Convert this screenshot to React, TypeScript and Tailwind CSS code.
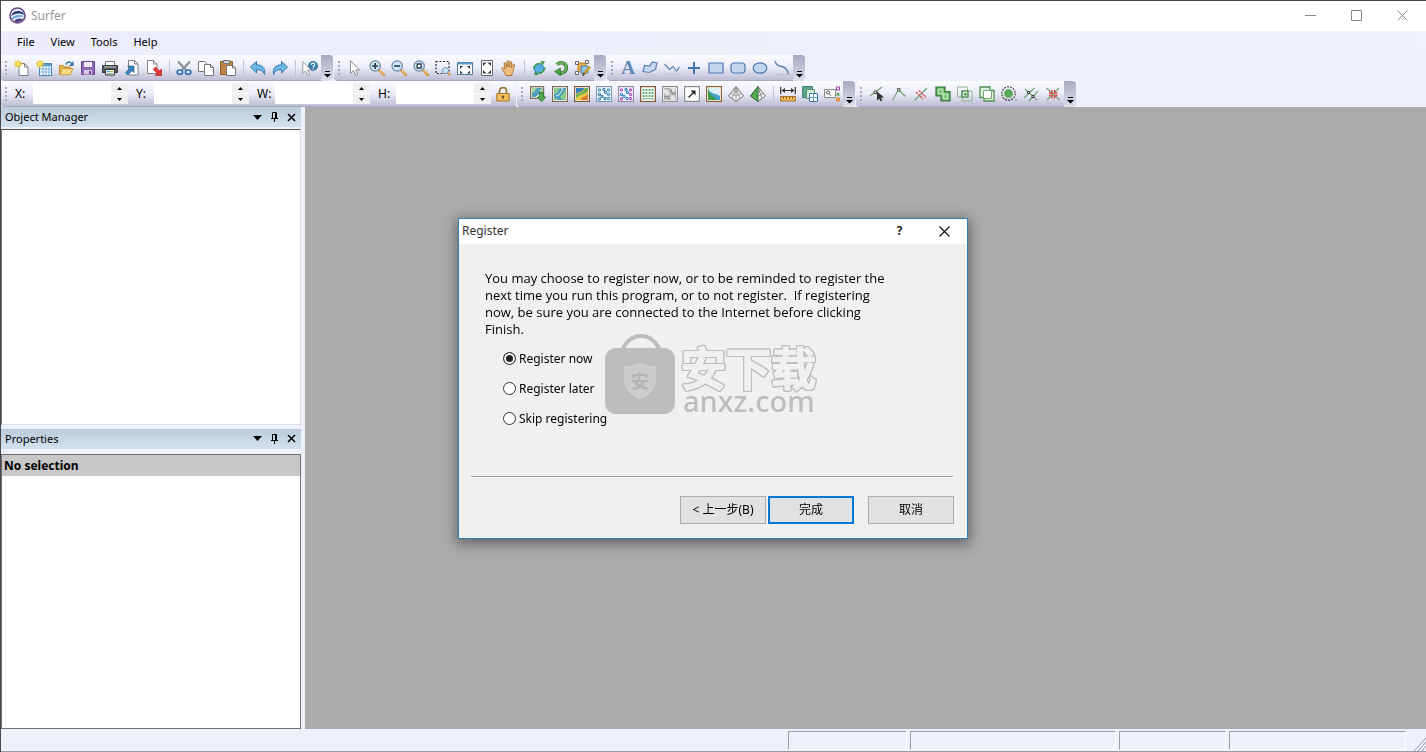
import { useState, type ReactNode } from 'react';

const GREEN = '#3f9a45';

function Sparkle() {
  return (
    <g stroke="#ecc81e" strokeWidth="1.3">
      <path d="M4 0v8M0 4h8M1.2 1.2l5.6 5.6M6.8 1.2L1.2 6.8" />
      <circle cx="4" cy="4" r="1.3" fill="#fff7b0" stroke="none" />
    </g>
  );
}

function Lens({ children }: { children?: ReactNode }) {
  return (
    <>
      <path d="M10 10l5 5" stroke="#d49a45" strokeWidth="2.6" strokeLinecap="round" />
      <path d="M10 9.6l4.6 4.6" stroke="#f5d08d" strokeWidth="1" />
      <circle cx="6.2" cy="6" r="5.2" fill="#cfe7f7" stroke="#6d879c" strokeWidth="1.2" />
      {children}
    </>
  );
}

function Frame({ color = '#8a8d90', children }: { color?: string; children?: ReactNode }) {
  return (
    <>
      <rect x=".6" y=".6" width="14.8" height="14.8" fill="#fff" stroke={color} strokeWidth="1.2" />
      {children}
    </>
  );
}

function Dots({ color, alt }: { color: string; alt: string }) {
  const points = [[3.5, 4], [8, 3.5], [12.5, 4], [3.5, 8.5], [12.5, 8.5], [6, 10.5], [3.5, 13], [9, 12.5], [12.5, 12.5], [9.5, 6.5]];
  return (
    <>
      {points.map(([x, y], i) => (
        <circle key={i} cx={x} cy={y} r="1.1" stroke={i % 2 ? alt : color} strokeWidth="1.1" />
      ))}
    </>
  );
}

const ICONS: Record<string, ReactNode> = {
  New: (
    <>
      <path d="M5 3.5h5.5l3.5 3.5v8.5H5z" fill="#fff" stroke="#7d7f86" />
      <path d="M10.5 3.5V7H14" stroke="#7d7f86" />
      <Sparkle />
    </>
  ),
  'New Worksheet': (
    <>
      <rect x="3.5" y="3.5" width="12" height="12" fill="#fff" stroke="#4f86b5" />
      <path d="M4 5h11" stroke="#5d9ccb" strokeWidth="2.4" />
      <path d="M4 9h11M4 12h11M7 6v9M10 6v9M13 6v9" stroke="#7fb4dc" strokeWidth="1.2" />
      <Sparkle />
    </>
  ),
  Open: (
    <>
      <path d="M1.5 14.5v-9h4l1 1.5h6v2" fill="#e7b850" stroke="#c08c2a" />
      <path d="M1.5 14.8l3-6.3h10.5l-3 6.3z" fill="#fbdc84" stroke="#c6963a" />
      <path d="M8 4.5C9 1.5 12 1.3 13.5 3.5" stroke="#2f74a8" strokeWidth="1.5" />
      <path d="M15.5 1v5H11z" fill="#2f74a8" />
    </>
  ),
  Save: (
    <>
      <path d="M1.5 1.5h13v13h-13z" fill="#8f68b5" stroke="#6d4695" />
      <path d="M4 2h8v5H4z" fill="#f0eaf6" />
      <path d="M4 10h8v4.5H4z" fill="#d9cbe6" />
      <path d="M9 11h2v3H9z" fill="#6d4695" />
    </>
  ),
  Print: (
    <>
      <path d="M3.5 1.5h9V6h-9z" fill="#fff" stroke="#777" />
      <path d="M.5 5.5h15v7H.5z" fill="#55585c" stroke="#3b3d40" />
      <path d="M2 7h12" stroke="#c9ccd0" />
      <path d="M3.5 9.5h9V15h-9z" fill="#e9f0e8" stroke="#333" />
      <path d="M5 11.5h3" stroke="#2ba8d8" />
      <path d="M8 11.5h3" stroke="#d5c235" />
      <path d="M5 13.5h6" stroke="#83bd88" />
    </>
  ),
  Import: (
    <>
      <path d="M4.5.5h6L14 4v11H4.5z" fill="#fff" stroke="#7d7f86" />
      <path d="M10.5.5V4H14" stroke="#7d7f86" />
      <path d="M10 6v6.5L8 10.8 3.8 15 1.5 12.7 5.7 8.5 3.8 6z" fill="#3784b9" stroke="#1f608f" strokeWidth=".7" />
    </>
  ),
  Export: (
    <>
      <path d="M1.5.5h6L11 4v9.5H1.5z" fill="#fff" stroke="#8a8080" />
      <path d="M7.5.5V4H11" stroke="#8a8080" />
      <path d="M15.5 15.5V9l-2 2-4-4-2.3 2.3 4 4L9 15.5z" fill="#e23b35" stroke="#ae1e1b" strokeWidth=".7" />
    </>
  ),
  Cut: (
    <>
      <path d="M2 1.5l8.5 9M14 1.5l-8.5 9" stroke="#858d94" strokeWidth="2" />
      <ellipse cx="3.8" cy="12.2" rx="2.8" ry="2.2" stroke="#3276b0" strokeWidth="1.7" />
      <ellipse cx="12.2" cy="12.2" rx="2.8" ry="2.2" stroke="#3276b0" strokeWidth="1.7" />
    </>
  ),
  Copy: (
    <>
      <path d="M.5 1.5h6L9 4v7.5H.5z" fill="#fff" stroke="#777" />
      <path d="M6.5 4.5h6l3 3v8h-9z" fill="#fff" stroke="#777" />
      <path d="M12.5 4.5v3h3" stroke="#777" />
    </>
  ),
  Paste: (
    <>
      <path d="M.5 1.5h12v13H.5z" fill="#bc8545" stroke="#8f5e27" />
      <path d="M3.5.5h6v3h-6z" fill="#d4d4d4" stroke="#777" />
      <path d="M6.5 5.5h6l3 2.5v7.5h-9z" fill="#fff" stroke="#777" />
      <path d="M12.5 5.5V8h3" stroke="#777" />
    </>
  ),
  Undo: (
    <path d="M6.5 1.5v3.3c6 0 9 3.7 8 9.7-1.2-3.5-3.500-5-8-5V13L.5 7z" fill="#70b9e4" stroke="#2d78ab" strokeLinejoin="round" />
  ),
  Redo: (
    <path d="M9.5 1.5v3.3c-6 0-9 3.7-8 9.7 1.2-3.5 3.5-5 8-5V13l6-6z" fill="#70b9e4" stroke="#2d78ab" strokeLinejoin="round" />
  ),
  'Context Help': (
    <>
      <circle cx="11" cy="6" r="5" fill="#397fab" />
      <path d="M9.3 4.8c.2-2.3 3.6-2 3.4 0 0 1.2-1.6 1.2-1.6 2.5M11.1 8.3v1.3" stroke="#fff" strokeWidth="1.3" />
      <path d="M.8 1.5v12L3.7 11l2 4.5 2-1-2-4.3h3.6z" fill="#fff" stroke="#85888d" strokeWidth=".8" />
    </>
  ),
  Select: <path d="M3.5.8v12.5l3-2.8 2.2 5 2-1-2-4.5h4z" fill="#fff" stroke="#888c93" />,
  'Zoom In': <Lens><path d="M3.2 6h6M6.2 3v6" stroke="#25394b" strokeWidth="1.6" /></Lens>,
  'Zoom Out': <Lens><path d="M3.2 6h6" stroke="#25394b" strokeWidth="1.6" /></Lens>,
  'Zoom Selected': <Lens><path d="M4.2 4h4v4h-4z" fill="#fff" stroke="#25394b" strokeWidth="1.3" /></Lens>,
  'Zoom Rectangle': (
    <>
      <path d="M1 1.5h13v12H1z" stroke="#333" strokeWidth="1.2" strokeDasharray="2 1.5" />
      <circle cx="10.5" cy="10.5" r="3" fill="#cde4f4" stroke="#7893ac" />
      <path d="M13 13l2.3 2.3" stroke="#d49a45" strokeWidth="2" />
    </>
  ),
  'Fit to Window': (
    <>
      <path d="M.5 2.5h15v12H.5z" fill="#fff" stroke="#527b9b" />
      <path d="M1 3.5h14" stroke="#5d9ccb" strokeWidth="2" />
      <path d="M3 9V6h3zM10 6h3v3zM3 10.5v3h3zM13 10.5v3h-3z" fill="#26343d" />
    </>
  ),
  'Fit to Page': (
    <>
      <path d="M2.5.5h11v15h-11z" fill="#fff" stroke="#66696c" />
      <path d="M4 6V2.500h3.500zM8.500 2.500H12V6zM4 10v3.500h3.500zM12 10v3.500H8.500z" fill="#333" />
    </>
  ),
  Pan: (
    <path d="M5 15.5C3.8 12.5 1.5 10 .8 8.3c.7-1.3 2-.4 3.3 1L3 3.5c.4-1.3 1.7-1 2 .2l1 3.5V1.8c.4-1.5 2-1.3 2 0V7l1-4.7c.6-1.2 2-.7 1.8.6l-.6 4.7 1.8-3c.8-.8 2-.1 1.6 1-.8 2.4-1.2 5.7-2.6 7.6v2.3z" fill="#efbf7d" stroke="#a46c2d" strokeWidth=".9" />
  ),
  Trackball: (
    <>
      <path d="M3 15h9" stroke="#c3c6d2" />
      <circle cx="8" cy="8.5" r="5" fill="#58aee2" stroke="#2a79ad" strokeWidth=".8" />
      <path d="M2.5 8.5C3.5 5 6 3.500 9.500 3.500" stroke={GREEN} strokeWidth="1.4" />
      <path d="M9.5.8l4.500.6-2.500 4z" fill={GREEN} />
      <path d="M14 7.500c-.8 3.500-3.500 5.500-6.500 5.500" stroke={GREEN} strokeWidth="1.4" />
      <path d="M7 15.200l-4.500-.6 2.500-3.600z" fill={GREEN} />
    </>
  ),
  Redraw: (
    <>
      <path d="M4 4.5C8 .8 13.5 3.5 13.3 8c-.2 4-5 6.5-8.3 4.3" stroke="#34792f" strokeWidth="3.6" />
      <path d="M4 4.5C8 .8 13.5 3.5 13.3 8c-.2 4-5 6.5-8.3 4.3" stroke="#68b25c" strokeWidth="2" />
      <path d="M7.5 8v7.5l-6-4z" fill="#4f9e47" stroke="#34792f" strokeWidth=".7" />
    </>
  ),
  Reshape: (
    <>
      <path d="M3 3h8v8H3z" fill="#f3b13d" stroke="#c07d1b" />
      <path d="M6 6h7v7H6z" fill="#8dc6ee" stroke="#427fae" />
      <path d="M.5 1.5h3v3h-3zM10.5.5h3v3h-3zM.5 11.5h3v3h-3z" fill="#fff" stroke="#555" strokeWidth=".9" />
      <path d="M15 6.5l-6.5 8" stroke="#d5952c" strokeWidth="2.4" />
      <path d="M9.5 13l-1.8 2.7" stroke="#444" strokeWidth="1.5" />
    </>
  ),
  Polygon: (
    <>
      <path d="M1 11.5l1.5-6 5 .5 3-4L15 3l-1.5 6.5-6.5 3z" fill="#c7d9ee" stroke="#5d7fae" strokeWidth="1.2" />
      <path d="M3 15h11" stroke="#b9c7db" />
    </>
  ),
  Polyline: (
    <>
      <path d="M.5 4l5 5.5 3.5-3 3.5 4.5 3-4" stroke="#5d7fae" strokeWidth="1.2" />
      <path d="M2 14.5h12" stroke="#b9c7db" />
    </>
  ),
  Symbol: <path d="M8 2v12M2 8h12" stroke="#4574aa" strokeWidth="2" />,
  Rectangle: <path d="M1 3h14v10H1z" fill="#c3d8f0" stroke="#4f77ad" strokeWidth="1.2" />,
  'Rounded Rectangle': <rect x="1" y="3" width="14" height="10" rx="3" fill="#c3d8f0" stroke="#4f77ad" strokeWidth="1.2" />,
  Ellipse: <ellipse cx="8" cy="8" rx="6.8" ry="5.2" fill="#c3d8f0" stroke="#4f77ad" strokeWidth="1.2" />,
  Spline: (
    <>
      <path d="M1 1c1 4 3 5 6.5 5.5 4 .5 6 3 7 8" stroke="#5d7fae" strokeWidth="1.3" />
      <path d="M1 14.5h12" stroke="#b9c7db" />
    </>
  ),
  Lock: (
    <>
      <path d="M4.5 8V5c0-4.5 7-4.5 7 0v3" stroke="#9a7a3c" strokeWidth="1.8" />
      <path d="M1.8 7.5h12.4V15H1.8z" fill="#f0bd5a" stroke="#a8782a" />
      <path d="M8 9.5V13M6.8 10.5h2.4" stroke="#5c3f12" strokeWidth="1.2" />
    </>
  ),
  'Base Map from Server': (
    <>
      <path d="M.6.6h13v11.8H.6z" fill="#eaf4e6" stroke="#7d6c55" strokeWidth="1.2" />
      <path d="M2 2h10.5v4L8 9l-3 2H2z" fill="#4d9fc0" />
      <path d="M2 2h5L4 6 2 7zM9 4l3.5-2v6z" fill="#a5d3a0" />
      <path d="M9.5 6.5h4V11h2.3l-4.3 4.8L7.2 11h2.3z" fill="#53a84d" stroke="#2e7730" strokeWidth=".8" />
    </>
  ),
  'Base Map': (
    <Frame color="#7d6c55">
      <path d="M2 2h12v12H2z" fill="#4d9fc0" />
      <path d="M2 2h6L5 7 2 8zM10 9l4-6v11h-3l-3-3zM2 11l4 3H2z" fill="#8cc98a" />
      <path d="M9 2l2 1-4 6-3 1" stroke="#e4f0dc" />
    </Frame>
  ),
  'Contour Map': (
    <Frame color="#7c5b34">
      <path d="M2 2h12v12H2z" fill="#e9c843" />
      <path d="M2 2h8c0 4-4 3-8 6z" fill="#377ec0" />
      <path d="M2 9c5-3 8-2 9-7h3v2c-2 5-7 3-12 8z" fill="#5dae57" />
      <path d="M7 14c0-4 5-3 7-6v6z" fill="#dd7b2c" />
    </Frame>
  ),
  'Post Map': <Frame color="#7d9bb4"><Dots color="#3e93bf" alt="#3e7fae" /></Frame>,
  'Classed Post Map': <Frame color="#9887b0"><Dots color="#b04fb8" alt="#3a85c2" /></Frame>,
  'Image Map': (
    <Frame color="#7c5b34">
      <path d="M3.5 2v12M6.5 2v12M9.5 2v12M12.5 2v12" stroke="#53a86a" strokeWidth="1.8" />
      <path d="M2 2.5h12M2 5.5h12M2 8.5h12M2 11.5h12M2 14h12" stroke="#fff" strokeWidth="1" />
    </Frame>
  ),
  'Shaded Relief': (
    <Frame>
      <path d="M2 2h12v12H2z" fill="#b5b5b5" />
      <path d="M2 3l4 1 2 4-3 2-3-3zM8 2h6l-2 5-3-2zM9 9l4 1v4H8z" fill="#e3e3e3" />
      <path d="M2 11l4-1 2 4M9 3l1 4 4 1" stroke="#858585" />
    </Frame>
  ),
  'Vector Map': (
    <Frame>
      <path d="M4.5 11.5l5-5" stroke="#222" strokeWidth="1.3" />
      <path d="M6.5 4.5h5v5z" fill="#222" />
    </Frame>
  ),
  'Watershed Map': (
    <Frame color="#8a632f">
      <path d="M2 2h12v12H2z" fill="#dff1f8" />
      <path d="M2 3c2 5 7 4 12 7v4H2z" fill="#42a0cb" />
      <path d="M2 2c1 7 5 8 9 12H2z" fill="#3f9a45" />
    </Frame>
  ),
  Wireframe: (
    <>
      <path d="M8 .5l7.5 9.5L8 15.5.5 10z" fill="#f4f4f4" stroke="#777" />
      <path d="M8 1v14M8 1L4 12.5M8 1l4 11.5M5.5 4.5L8 6l2.5-1.5M3 7.5L8 10l5-2.5" stroke="#888" strokeWidth=".8" />
    </>
  ),
  Surface: (
    <>
      <path d="M8 .5l7.5 9.5L8 15.5.5 10z" fill="#f4f4f4" stroke="#777" />
      <path d="M8 .5v15L.5 10z" fill="#56a852" stroke="#2f7432" />
      <path d="M8 1l4 11.5M8 6l2.5-1.5M8 10l5-2.5" stroke="#777" strokeWidth=".8" />
    </>
  ),
  Measure: (
    <>
      <path d="M.7 1v7M15.3 1v7M3 4.5h10" stroke="#333" strokeWidth="1.2" />
      <path d="M5 2v5L1.5 4.5zM11 2v5l3.5-2.5z" fill="#333" />
      <path d="M.6 10.5h14.8V15H.6z" fill="#f3bd5a" stroke="#a36e25" />
      <path d="M3.5 11v2M6.5 11v2M9.5 11v2M12.5 11v2" stroke="#8a5c1e" />
    </>
  ),
  'Track Cursor': (
    <>
      <path d="M.6.6h10v11H.6z" fill="#59aa8c" stroke="#477" />
      <path d="M4.5 3.5h8v9h-8z" fill="#d5ecd0" stroke="#57926a" />
      <path d="M7.5 7.5h8v8h-8z" fill="#fff" stroke="#3f79a8" />
      <path d="M8 11.5h7M11.5 8v7" stroke="#5d9ccb" />
    </>
  ),
  'Grid Query': (
    <>
      <path d="M.5 3.5h11v8H.5z" fill="#fff" stroke="#888" />
      <circle cx="4" cy="6.5" r="1.6" stroke="#555" />
      <path d="M5.2 7.8l2 2" stroke="#555" />
      <path d="M12.5 1h3v3h-3z" stroke="#a64fb5" strokeWidth="1.2" />
      <path d="M14 6l2 3.5h-4z" fill="#3f9a45" />
      <circle cx="14" cy="13.5" r="1.8" fill="#f29b38" stroke="#cc7118" strokeWidth=".6" />
    </>
  ),
  'Edit Vertices': (
    <>
      <path d="M1 10L13 1M5 6l8 4" stroke="#75a577" strokeWidth="1.2" />
      <path d="M5 5h2.5v2.5H5z" fill="#fff" stroke="#444" />
      <path d="M8 5.5v9l2.3-1.7 1.500 2.700 1.500-1-1.300-2.700 3-.3z" fill="#333" />
    </>
  ),
  'Insert Vertex': (
    <>
      <path d="M1.5 14l6-10 7 6.5" stroke="#75a577" strokeWidth="1.2" />
      <path d="M6.5 2.5H9V5H6.5z" fill="#fff" stroke="#555" />
      <path d="M2 15.5h9" stroke="#c2cabf" />
    </>
  ),
  'Break Line': (
    <>
      <path d="M1.5 14.5L14 2" stroke="#75a577" strokeWidth="1.2" />
      <path d="M3 6l7 7M6 4.5l7 7" stroke="#d04741" strokeWidth="1.3" strokeDasharray="2.2 .8" />
    </>
  ),
  'Union Polygons': (
    <>
      <path d="M1 1h9v4.5h5V15H6v-5H1z" fill="#57a957" stroke="#34753a" strokeWidth="1.2" />
      <path d="M3 3h5v5H3z" fill="#83c67e" stroke="#d4ecd2" />
      <path d="M8 8h5v5H8z" fill="#83c67e" stroke="#d4ecd2" />
    </>
  ),
  'Intersect Polygons': (
    <>
      <path d="M.5 1h10v10H.5zM5 5h10v10H5z" stroke="#8eb890" />
      <path d="M5 5h6v6H5z" fill="#dff0dc" stroke="#34753a" strokeWidth="1.2" />
      <path d="M7 7h2.500v2.500H7z" fill="#4a9e4c" />
    </>
  ),
  'Difference Polygons': (
    <>
      <path d="M1 1h10v3.5h4V15H5v-3.5H1z" fill="#e4f2e1" stroke="#4f8f52" strokeWidth="1.3" />
      <path d="M4.5 4.5h8v8h-8z" fill="#fff" stroke="#72a874" />
    </>
  ),
  Buffer: (
    <>
      <circle cx="7.5" cy="7.5" r="6.7" stroke="#333" strokeWidth="1.2" strokeDasharray="1.8 1.2" />
      <circle cx="7.5" cy="7.5" r="4.2" fill="#57a957" stroke="#7dbb7a" />
      <path d="M15 13.5V15" stroke="#555" />
    </>
  ),
  'Points at Intersections': (
    <>
      <path d="M1 12L11.5 2M6 15l9-10M2 3l12 11" stroke="#75a577" strokeWidth="1.2" />
      <path d="M4.5 5.5h2v2h-2zM9 9.5h2v2H9z" fill="#fff" stroke="#333" />
    </>
  ),
  'Break at Intersections': (
    <>
      <path d="M1.5 2l13 12M14 2L2 14" stroke="#75a577" strokeWidth="1.2" />
      <path d="M7 4v3H4M9.5 4v3h3M7 12.5v-3H4M9.5 12.5v-3h3" stroke="#d04741" strokeWidth="1.4" />
    </>
  ),
};

function Tool({ name }: { name: string }) {
  if (name === '|') {
    return (
      <span className="flex w-2 justify-center">
        <span className="h-4 w-px bg-[#c2c4d4]" />
      </span>
    );
  }
  return (
    <button type="button" aria-label={name} title={name} className="flex h-[22px] w-[22px] shrink-0 items-center justify-center">
      {name === 'Text' ? (
        <span className="font-['Liberation_Serif',serif] text-[19px] leading-none font-bold text-[#5f86b8]">A</span>
      ) : (
        <svg width="16" height="16" viewBox="0 0 16 16" fill="none">{ICONS[name]}</svg>
      )}
    </button>
  );
}

function Toolbar({ tools = [], children, overflow = true }: { tools?: string[]; children?: ReactNode; overflow?: boolean }) {
  return (
    <div className="flex h-[26px] shrink-0">
      <div className="flex items-center rounded-l-sm border-b border-[#a9a9c0] bg-linear-to-b from-[#fbfcff] via-[#ebecf8] to-[#bdbdd4]">
        <span className="flex w-[10px] flex-col items-center gap-[2px]">
          {[0, 1, 2, 3].map((n) => (
            <span key={n} className="h-[2px] w-[2px] bg-[#a8aab8]" />
          ))}
        </span>
        {children}
        {tools.map((name, i) => (
          <Tool key={i} name={name} />
        ))}
      </div>
      {overflow && (
        <button
          type="button"
          aria-label="Toolbar options"
          className="flex w-3 items-end justify-center rounded-r-sm bg-linear-to-b from-[#a9a9c2] to-[#dddeed] pb-[3px]"
        >
          <svg width="7" height="7" viewBox="0 0 7 7">
            <path d="M1 0h5v1H1zM0 3h7L3.5 6.5z" fill="#000" />
          </svg>
        </button>
      )}
    </div>
  );
}

function Coordinate({ label }: { label: string }) {
  const [value, setValue] = useState('');
  const step = (by: number) => setValue(String(Number(value) + by));

  return (
    <div className="flex items-center">
      <label htmlFor={`pos-${label}`} className="w-[18px] text-[12px] leading-4">{label}:</label>
      <input
        id={`pos-${label}`}
        value={value}
        onChange={(e) => setValue(e.target.value)}
        className="h-5 w-[78px] bg-white px-1 text-[12px] outline-none"
      />
      <span className="flex w-[17px] flex-col gap-px bg-white">
        <button type="button" aria-label={`Increase ${label}`} onClick={() => step(1)} className="flex h-[10px] items-center justify-center bg-[#f0f0f2]">
          <svg width="5" height="3" viewBox="0 0 5 3"><path d="M0 3h5L2.5 0z" /></svg>
        </button>
        <button type="button" aria-label={`Decrease ${label}`} onClick={() => step(-1)} className="flex h-[10px] items-center justify-center bg-[#f0f0f2]">
          <svg width="5" height="3" viewBox="0 0 5 3"><path d="M0 0h5L2.5 3z" /></svg>
        </button>
      </span>
    </div>
  );
}

function PanelHeader({ title }: { title: string }) {
  return (
    <div className="flex h-5 shrink-0 items-center bg-linear-to-b from-[#bccbdb] to-[#d3e2ee] pr-px pl-1">
      <h2 className="flex-1 text-[11px] leading-4">{title}</h2>
      <button type="button" aria-label={`${title} menu`} className="flex w-[17px] justify-center">
        <svg width="9" height="5" viewBox="0 0 9 5"><path d="M0 0h9L4.5 5z" /></svg>
      </button>
      <button type="button" aria-label={`Pin ${title}`} className="flex w-[17px] justify-center">
        <svg width="9" height="10" viewBox="0 0 9 10" fill="none" stroke="#000">
          <path d="M2.5 6V.5h4V6M5.5 1v5M1 6.5h7M4.5 7v3" />
        </svg>
      </button>
      <button type="button" aria-label={`Close ${title}`} className="flex w-[17px] justify-center">
        <svg width="9" height="9" viewBox="0 0 9 9" stroke="#000" strokeWidth="1.5"><path d="M1 1l7 7M8 1L1 8" /></svg>
      </button>
    </div>
  );
}

function Watermark() {
  return (
    <div className="pointer-events-none absolute top-[115px] left-[146px] flex text-[#bdbdbd]">
      <svg width="71" height="80" viewBox="0 0 71 80" className="shrink-0">
        <path d="M17 17C24-3 48-3 55 17" fill="none" stroke="#bdbdbd" strokeWidth="4" />
        <rect y="14" width="70" height="66" rx="11" fill="#bdbdbd" />
        <path d="M20 33q10 0 15-4 5 4 15 4v14q0 11-15 18-15-7-15-18z" fill="#cbcbc9" stroke="#d4d4d2" />
        <text x="35" y="54" textAnchor="middle" fontSize="18" fontWeight="700" fill="#b4b4b2" fontFamily="Noto Sans CJK SC, sans-serif">安</text>
      </svg>
      <div className="ml-[5px] pt-3 whitespace-nowrap">
        <div className="font-['Noto_Sans_CJK_SC',sans-serif] text-[45px] leading-[42px] font-medium text-[#f0f0f0] [-webkit-text-stroke:2px_#f0f0f0] [filter:drop-shadow(1px_0_0_#bdbdbd)_drop-shadow(-1px_0_0_#bdbdbd)_drop-shadow(0_1px_0_#bdbdbd)_drop-shadow(0_-1px_0_#bdbdbd)]">
          安下载
        </div>
        <div className="pl-[2px] font-['Noto_Sans',sans-serif] text-[29px] leading-[26px] font-medium">anxz.com</div>
      </div>
    </div>
  );
}

const CHOICES = ['Register now', 'Register later', 'Skip registering'];

function RegisterDialog() {
  const [choice, setChoice] = useState(CHOICES[0]);
  const buttonStyle = 'h-7 w-[86px] bg-[#e1e1e1] text-[12px] leading-4';

  return (
    <div
      role="dialog"
      aria-label="Register"
      className="relative w-[510px] border border-[#2f7fb5] bg-[#f0f0f0] shadow-[0_3px_12px_2px_rgba(0,0,0,0.4)]"
    >
      <div className="flex h-[25px] items-center bg-white pb-px pl-[3px]">
        <h1 className="flex-1 text-[12px] leading-4 text-[#333]">Register</h1>
        <button type="button" aria-label="Help" className="w-[45px] text-[12px] leading-4 font-semibold">?</button>
        <button type="button" aria-label="Close" className="flex w-[45px] justify-center">
          <svg width="11" height="11" viewBox="0 0 11 11" stroke="#111" strokeWidth="1.2"><path d="M.5.5l10 10M10.5.5l-10 10" /></svg>
        </button>
      </div>

      <div className="px-[26px] pt-[26px]">
        <p className="font-['Open_Sans',sans-serif] text-[13px] leading-[17px] whitespace-pre">
          {`You may choose to register now, or to be reminded to register the
next time you run this program, or to not register.  If registering
now, be sure you are connected to the Internet before clicking
Finish.`}
        </p>
        <fieldset className="mt-[6px] pl-[18px]">
          {CHOICES.map((name) => (
            <label key={name} className="flex h-[30px] items-center gap-[3px] pb-px text-[12px] leading-4">
              <input
                type="radio"
                name="registration"
                checked={choice === name}
                onChange={() => setChoice(name)}
                className="h-[13px] w-[13px] appearance-none rounded-full border border-[#333] bg-white checked:bg-[#222] checked:shadow-[inset_0_0_0_2px_#fff]"
              />
              {name}
            </label>
          ))}
        </fieldset>
      </div>

      <div className="mt-[42px] mr-[14px] ml-3 border-t border-b border-t-[#a0a0a0] border-b-white" />
      <div className="flex justify-end pt-[18px] pr-[13px] pb-[14px]">
        <button type="button" className={`${buttonStyle} border border-[#adadad]`}>&lt; 上一步(B)</button>
        <button type="button" className={`${buttonStyle} ml-[2px] border-2 border-[#0078d7]`}>完成</button>
        <button type="button" className={`${buttonStyle} ml-[14px] border border-[#adadad]`}>取消</button>
      </div>
      <Watermark />
    </div>
  );
}

export default function App() {
  return (
    <div className="flex h-screen flex-col overflow-hidden border-t border-l border-[#4a484c] bg-[#eef1fb] font-['Noto_Sans','Noto_Sans_CJK_SC',sans-serif] text-black">
      {/* Title bar */}
      <header className="flex h-[30px] shrink-0 items-center bg-white pr-px pb-px pl-2">
        <svg width="17" height="17" viewBox="0 0 17 17">
          <circle cx="8.5" cy="8.5" r="7.5" fill="#e7edf6" stroke="#6d4a86" strokeWidth="1.6" />
          <path d="M2 9C3.5 4 9 2.5 14 5.5L15 8C10.5 5.5 6 6.5 2 9z" fill="#283a78" />
          <path d="M2.5 11c4-4 8.5-3.5 12.5-2-2.5 1.5-6.5 0-11.5 3.5z" fill="#65a9d4" />
          <path d="M5 14c3-3 6-3 9-2-2 3-6 4-9 2z" fill="#3d3b7d" />
        </svg>
        <span className="flex-1 pl-[5px] text-[12px] leading-4 text-[#999]">Surfer</span>
        <button type="button" aria-label="Minimize" className="flex w-[46px] justify-center">
          <svg width="11" height="11" viewBox="0 0 11 11" stroke="#888"><path d="M0 5.5h11" /></svg>
        </button>
        <button type="button" aria-label="Maximize" className="flex w-[46px] justify-center">
          <svg width="11" height="11" viewBox="0 0 11 11" fill="none" stroke="#888"><path d="M.5.5h10v10H.5z" /></svg>
        </button>
        <button type="button" aria-label="Close" className="flex w-[46px] justify-center">
          <svg width="11" height="11" viewBox="0 0 11 11" stroke="#888"><path d="M.5.5l10 10M10.5.5l-10 10" /></svg>
        </button>
      </header>

      {/* Menu */}
      <nav className="flex h-6 shrink-0 items-center gap-4 bg-linear-to-r from-[#ececfb] to-[#eff3fc] pb-[2px] pl-4 text-[11px] leading-4">
        {['File', 'View', 'Tools', 'Help'].map((name) => (
          <button key={name} type="button">{name}</button>
        ))}
      </nav>

      {/* Toolbars */}
      <div className="flex shrink-0 flex-col">
        <div className="flex gap-px">
          <Toolbar
            tools={['New', 'New Worksheet', 'Open', 'Save', 'Print', 'Import', 'Export', '|', 'Cut', 'Copy', 'Paste', '|', 'Undo', 'Redo', '|', 'Context Help']}
          />
          <Toolbar
            tools={['Select', 'Zoom In', 'Zoom Out', 'Zoom Selected', 'Zoom Rectangle', 'Fit to Window', 'Fit to Page', 'Pan', '|', 'Trackball', 'Redraw', 'Reshape']}
          />
          <Toolbar tools={['Text', 'Polygon', 'Polyline', 'Symbol', 'Rectangle', 'Rounded Rectangle', 'Ellipse', 'Spline']} />
        </div>
        <div className="flex gap-px">
          <Toolbar overflow={false}>
            <div className="flex gap-2 pr-px pl-1">
              {['X', 'Y', 'W', 'H'].map((label) => (
                <Coordinate key={label} label={label} />
              ))}
            </div>
            <div className="pr-[2px]">
              <Tool name="Lock" />
            </div>
          </Toolbar>
          <Toolbar
            tools={['Base Map from Server', 'Base Map', 'Contour Map', 'Post Map', 'Classed Post Map', 'Image Map', 'Shaded Relief', 'Vector Map', 'Watershed Map', 'Wireframe', 'Surface', '|', 'Measure', 'Track Cursor', 'Grid Query']}
          />
          <Toolbar
            tools={['Edit Vertices', 'Insert Vertex', 'Break Line', 'Union Polygons', 'Intersect Polygons', 'Difference Polygons', 'Buffer', 'Points at Intersections', 'Break at Intersections']}
          />
        </div>
      </div>

      {/* Docked panels and plot area */}
      <div className="flex min-h-0 flex-1">
        <aside className="flex w-[304px] shrink-0 flex-col pr-1">
          <section className="flex flex-[320] flex-col pb-1">
            <PanelHeader title="Object Manager" />
            <div className="mt-[2px] flex-1 border border-[#dcdfe8] border-t-[#555] border-l-[#777] bg-white" />
          </section>
          <section className="flex flex-[302] flex-col">
            <PanelHeader title="Properties" />
            <div className="mt-[5px] flex-1 border border-[#6f6f6f] bg-white">
              <div className="h-[21px] bg-[#c8c8c8] pl-[2px] text-[12px] leading-[21px] font-bold">No selection</div>
            </div>
          </section>
        </aside>
        <main className="flex-1 bg-[#ababab]" />
      </div>

      {/* Status bar */}
      <footer className="flex h-[23px] shrink-0 justify-end gap-[3px] border-b border-[#9a9ca4] pt-[2px] pb-px">
        {['w-[119px]', 'w-[206px]', 'w-[107px]', 'w-[177px]'].map((width) => (
          <span key={width} className={`${width} border border-white border-t-[#9a9ca8] border-l-[#9a9ca8]`} />
        ))}
        <svg width="17" height="20" viewBox="0 0 17 20" stroke="#8f95a5" className="shrink-0">
          <path d="M5 20L17 7M9 20l8-9M13 20l4-5" />
        </svg>
      </footer>

      <div className="fixed inset-0 flex items-center justify-center pt-[5px]">
        <RegisterDialog />
      </div>
    </div>
  );
}
